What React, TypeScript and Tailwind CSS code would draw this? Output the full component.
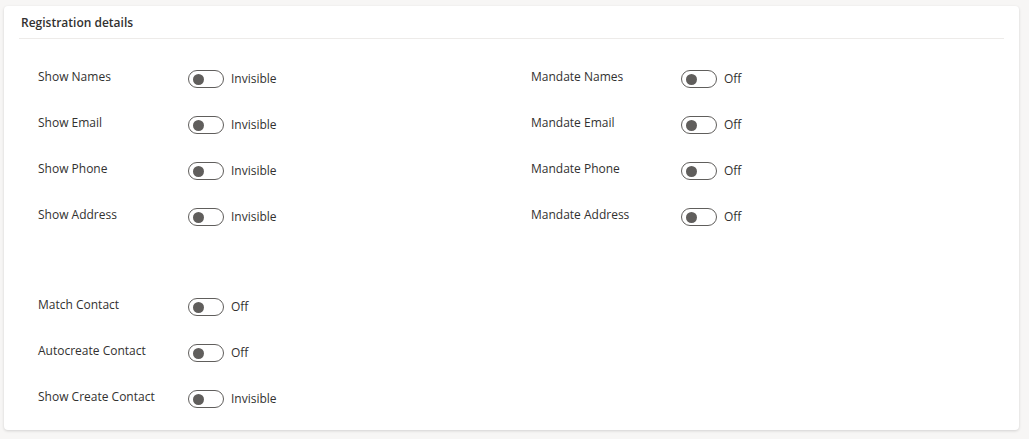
import React from 'react';

type Setting = { label: string; value: string };

const leftFields: Setting[] = [
  { label: 'Show Names', value: 'Invisible' },
  { label: 'Show Email', value: 'Invisible' },
  { label: 'Show Phone', value: 'Invisible' },
  { label: 'Show Address', value: 'Invisible' },
];

const rightFields: Setting[] = [
  { label: 'Mandate Names', value: 'Off' },
  { label: 'Mandate Email', value: 'Off' },
  { label: 'Mandate Phone', value: 'Off' },
  { label: 'Mandate Address', value: 'Off' },
];

const contactFields: Setting[] = [
  { label: 'Match Contact', value: 'Off' },
  { label: 'Autocreate Contact', value: 'Off' },
  { label: 'Show Create Contact', value: 'Invisible' },
];

const Toggle: React.FC = () => (
  <span className="relative inline-flex h-[18px] w-[36px] shrink-0 items-center rounded-full border border-[#605e5c] bg-white">
    <span className="ml-[4px] h-[11px] w-[11px] rounded-full bg-[#605e5c]" />
  </span>
);

const SettingRow: React.FC<Setting> = ({ label, value }) => (
  <div className="flex h-[46px] items-center">
    <span className="mb-[4px] w-[150px] shrink-0">{label}</span>
    <Toggle />
    <span className="ml-[7px]">{value}</span>
  </div>
);

const App: React.FC = () => {
  return (
    <div
      className="h-[439px] w-full bg-[#f7f6f5] pt-[6px] pl-[4px] text-[12px] text-[#323130]"
      style={{ fontFamily: '"Open Sans", "Noto Sans", sans-serif' }}
    >
      <div className="h-[424px] w-[1015px] rounded-[4px] bg-white shadow-[0_1px_3px_rgba(0,0,0,0.15)]">
        <div className="flex h-[32px] items-center pt-[1px] pl-[17px] text-[12px] font-semibold">
          Registration details
        </div>
        <div className="mx-[15px] border-t border-[#edebe9]" />

        <div className="grid grid-cols-[493px_1fr] pt-[17px] pl-[34px]">
          <div>
            {leftFields.map((f) => (
              <SettingRow key={f.label} {...f} />
            ))}
          </div>
          <div>
            {rightFields.map((f) => (
              <SettingRow key={f.label} {...f} />
            ))}
          </div>
        </div>

        <div className="mt-[44px] pl-[34px]">
          {contactFields.map((f) => (
            <SettingRow key={f.label} {...f} />
          ))}
        </div>
      </div>
    </div>
  );
};

export default App;
